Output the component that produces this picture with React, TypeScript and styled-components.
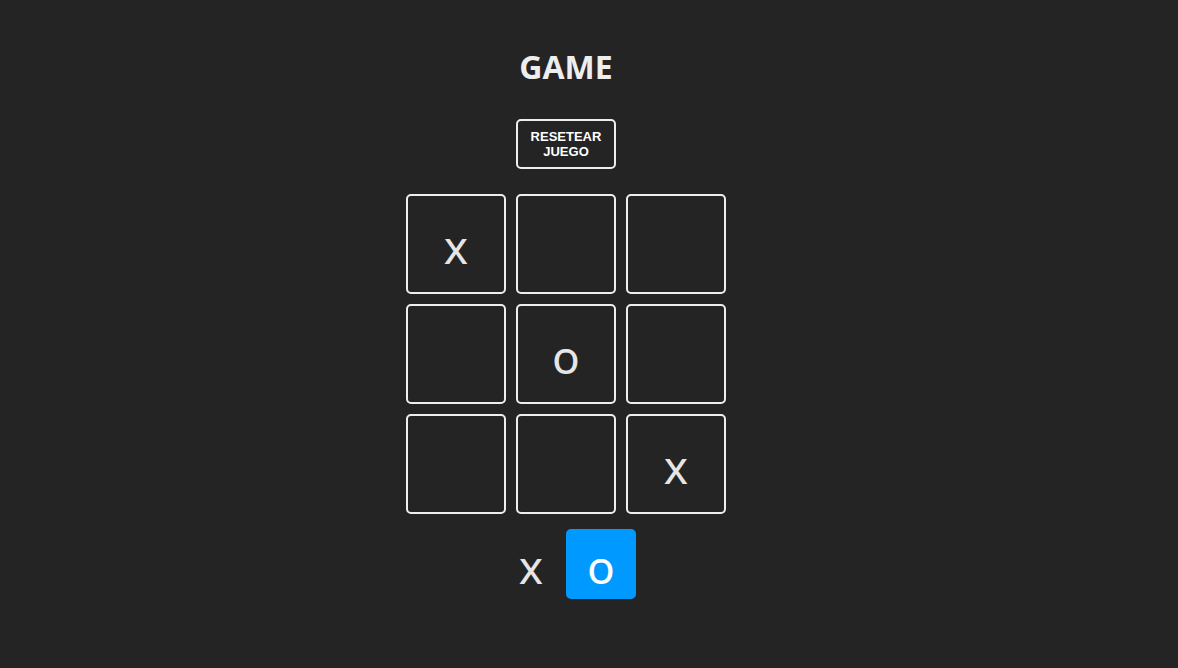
import React, { useState } from "react";
import styled, { createGlobalStyle } from "styled-components";

const GlobalStyle = createGlobalStyle`
  *, *::before, *::after { box-sizing: border-box; }
  body {
    margin: 0;
    min-height: 100vh;
    background: #242424;
    color: #e6e6e6;
    font-family: "Noto Sans", "Open Sans", sans-serif;
    font-size: 16px;
    line-height: 24px;
  }
`;

const Board = styled.main`
  display: flex;
  flex-direction: column;
  align-items: center;
  width: fit-content;
  margin: 0 auto;
  padding: 40px 46px 0 0;
  text-align: center;
`;

const Title = styled.h1`
  margin: 0 0 26px;
  color: #eee;
  font-family: "Open Sans", "Noto Sans", sans-serif;
  font-size: 32px;
  font-weight: 700;
  line-height: 53px;
`;

const ResetButton = styled.button`
  width: 100px;
  margin-bottom: 25px;
  padding: 8px 10px;
  border: 2px solid #eee;
  border-radius: 5px;
  background: transparent;
  color: #fff;
  font-family: "Liberation Sans", Arial, sans-serif;
  font-size: 13px;
  font-weight: 700;
  line-height: 15px;
  text-transform: uppercase;
  cursor: pointer;
`;

const Game = styled.section`
  display: grid;
  grid-template-columns: repeat(3, 100px);
  grid-auto-rows: 100px;
  gap: 10px;
`;

const Square = styled.button`
  display: grid;
  place-items: center;
  padding: 4px 0 0;
  border: 2px solid #eee;
  border-radius: 5px;
  background: transparent;
  color: inherit;
  font-family: inherit;
  font-size: 46px;
  line-height: 48px;
  cursor: pointer;
`;

const Turns = styled.section`
  display: flex;
  margin-top: 15px;
`;

const Turn = styled.div<{ $active: boolean }>`
  display: grid;
  place-items: center;
  width: 70px;
  height: 70px;
  padding-top: 4px;
  border-radius: 5px;
  background: ${({ $active }) => ($active ? "#0099ff" : "transparent")};
  color: ${({ $active }) => ($active ? "#fff" : "inherit")};
  font-size: 46px;
  line-height: 48px;
`;

type Mark = "x" | "o";
const initial: (Mark | null)[] = ["x", null, null, null, "o", null, null, null, "x"];

export default function App() {
  const [cells, setCells] = useState(initial);
  const [turn, setTurn] = useState<Mark>("o");

  const play = (index: number) => {
    if (cells[index]) return;
    setCells(cells.map((cell, i) => (i === index ? turn : cell)));
    setTurn(turn === "x" ? "o" : "x");
  };

  const reset = () => {
    setCells(cells.map(() => null));
    setTurn("x");
  };

  return (
    <>
      <GlobalStyle />
      <Board>
        <Title>GAME</Title>
        <ResetButton onClick={reset}>Resetear juego</ResetButton>
        <Game>
          {cells.map((cell, i) => (
            <Square key={i} aria-label={cell ? undefined : `Casilla ${i + 1}`} onClick={() => play(i)}>
              {cell}
            </Square>
          ))}
        </Game>
        <Turns>
          <Turn $active={turn === "x"}>x</Turn>
          <Turn $active={turn === "o"}>o</Turn>
        </Turns>
      </Board>
    </>
  );
}
